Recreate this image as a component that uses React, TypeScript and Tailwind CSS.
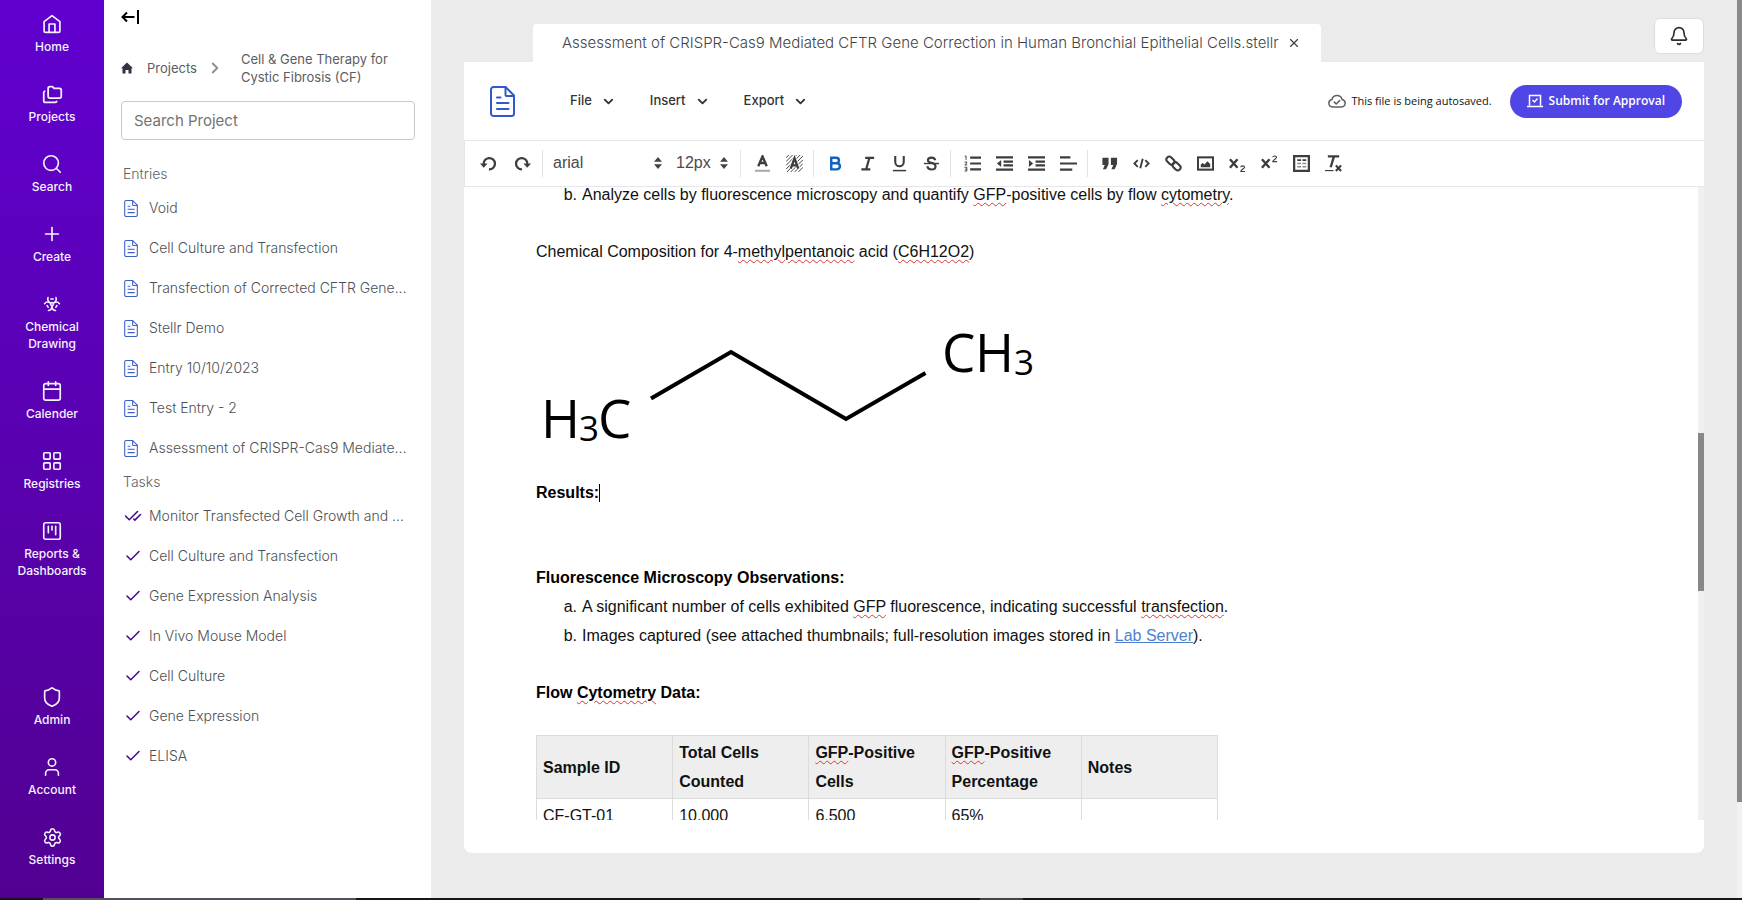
import type { ReactNode } from "react";
import {
  Bell,
  Biohazard,
  Calendar,
  Check,
  CheckCheck,
  ChevronDown,
  ChevronRight,
  Folders,
  LayoutGrid,
  Plus,
  Search,
  Settings,
  Shield,
  SquareKanban,
  User,
  X,
} from "lucide-react";

function HomeIcon() {
  return (
    <svg viewBox="0 0 24 24" className="size-5" fill="none" stroke="currentColor" strokeWidth="2" strokeLinejoin="round" strokeLinecap="round">
      <path d="M2.500 9.200 12 2l9.500 7.200V20a2 2 0 0 1-2 2h-15a2 2 0 0 1-2-2Z" />
      <path d="M8.500 21.500V12h7v9.500" />
    </svg>
  );
}

function DocIcon({ className }: { className: string }) {
  return (
    <svg viewBox="0 0 25 31" className={className} fill="none" stroke="currentColor" strokeWidth="2" strokeLinejoin="round" strokeLinecap="round">
      <path d="M15.500 1H3.500A2.500 2.500 0 0 0 1 3.500v24A2.500 2.500 0 0 0 3.500 30h18a2.500 2.500 0 0 0 2.500-2.500V9.500Z" />
      <path d="M15.500 1v8a1 1 0 0 0 1 1H24" />
      <path d="M7 11.500h3.500M7 17h11.500M7 23h11.500" />
    </svg>
  );
}

type NavEntry = { label: string; lines: string[]; icon: ReactNode };

const topNav: NavEntry[] = [
  { label: "Home", lines: ["Home"], icon: <HomeIcon /> },
  { label: "Projects", lines: ["Projects"], icon: <Folders className="size-[21px]" /> },
  { label: "Search", lines: ["Search"], icon: <Search className="size-[22px]" strokeWidth={1.8} /> },
  { label: "Create", lines: ["Create"], icon: <Plus className="size-[22px]" strokeWidth={1.8} /> },
  { label: "Chemical Drawing", lines: ["Chemical", "Drawing"], icon: <Biohazard className="size-[18px]" /> },
  { label: "Calendar", lines: ["Calender"], icon: <Calendar className="size-[22px]" strokeWidth={1.8} /> },
  { label: "Registries", lines: ["Registries"], icon: <LayoutGrid className="size-[22px]" strokeWidth={1.8} /> },
  { label: "Reports", lines: ["Reports &", "Dashboards"], icon: <SquareKanban className="size-[22px]" strokeWidth={1.8} /> },
];

const bottomNav: NavEntry[] = [
  { label: "Admin", lines: ["Admin"], icon: <Shield className="size-[22px]" strokeWidth={1.8} /> },
  { label: "Account", lines: ["Account"], icon: <User className="size-[22px]" strokeWidth={1.8} /> },
  { label: "Settings", lines: ["Settings"], icon: <Settings className="size-[21px]" strokeWidth={1.8} /> },
];

function NavList({ items }: { items: NavEntry[] }) {
  return (
    <ul className="flex flex-col gap-[29px]">
      {items.map((item) => (
        <li key={item.label}>
          <a href="#" className="flex flex-col items-center gap-1 text-center text-xs leading-[17px] font-medium text-violet-50">
            <span className="flex h-5 items-center justify-center">{item.icon}</span>
            <span>
              {item.lines.map((line) => (
                <span key={line} className="block">{line}</span>
              ))}
            </span>
          </a>
        </li>
      ))}
    </ul>
  );
}

const entries = [
  "Void",
  "Cell Culture and Transfection",
  "Transfection of Corrected CFTR Gene...",
  "Stellr Demo",
  "Entry 10/10/2023",
  "Test Entry - 2",
  "Assessment of CRISPR-Cas9 Mediate...",
];

const tasks = [
  "Monitor Transfected Cell Growth and ...",
  "Cell Culture and Transfection",
  "Gene Expression Analysis",
  "In Vivo Mouse Model",
  "Cell Culture",
  "Gene Expression",
  "ELISA",
];

function PanelItem({ icon, label }: { icon: ReactNode; label: string }) {
  return (
    <li>
      <a href="#" className="flex h-10 items-center whitespace-nowrap text-[#4c4f54]">
        <span className="flex w-7 shrink-0 items-center justify-start pl-[3px]">{icon}</span>
        {label}
      </a>
    </li>
  );
}

function ProjectPanel() {
  return (
    <aside className="flex w-[327px] shrink-0 flex-col bg-white pr-4 pl-[17px] text-sm font-light">
      <button type="button" aria-label="Collapse panel" className="mt-2 flex h-[18px] w-7 items-center text-black">
        <svg viewBox="0 0 18 14" className="h-[14px] w-[18px]" fill="none" stroke="currentColor" strokeWidth="2">
          <path d="M13.500 7H2M6 2.500 1.500 7 6 11.500M17 0v14" />
        </svg>
      </button>
      <nav aria-label="Breadcrumb" className="mt-6 flex items-center text-[13px] leading-[18px] font-normal text-[#5a5d63]">
        <a href="#" aria-label="Projects home">
          <svg viewBox="0 0 12 12" className="size-3" fill="#2f3440">
            <path d="M6 .5 12 6.200h-1.500V11.500H7.500V8h-3v3.500H1.500V6.200H0Z" />
          </svg>
        </a>
        <a href="#" className="ml-[14px]">Projects</a>
        <ChevronRight className="ml-[9px] size-[18px] text-[#8d8f94]" strokeWidth={2.5} />
        <a href="#" className="ml-[17px]">
          Cell &amp; Gene Therapy for
          <br />
          Cystic Fibrosis (CF)
        </a>
      </nav>
      <input
        type="text"
        aria-label="Search Project"
        placeholder="Search Project"
        className="mt-[15px] h-[39px] w-full shrink-0 rounded border border-[#c9c9cd] px-3 text-[15px] font-normal placeholder:text-[#737373]"
      />
      <h2 className="mt-5 flex h-7 shrink-0 items-center pl-[2px] text-[#5c5f64]">Entries</h2>
      <ul>
        {entries.map((label) => (
          <PanelItem key={label} label={label} icon={<DocIcon className="h-[17px] w-[14px] text-[#3d62c6]" />} />
        ))}
      </ul>
      <h2 className="flex h-7 shrink-0 items-center pl-[2px] text-[#5c5f64]">Tasks</h2>
      <ul>
        {tasks.map((label, i) => (
          <PanelItem
            key={label}
            label={label}
            icon={
              i === 0 ? (
                <CheckCheck className="size-[18px] shrink-0 text-[#3f0a8a]" />
              ) : (
                <Check className="size-[18px] shrink-0 text-[#3f0a8a]" />
              )
            }
          />
        ))}
      </ul>
    </aside>
  );
}

function ToolGroup({ children }: { children: ReactNode }) {
  return <div className="flex h-[27px] items-center border-l border-[#e3e3e5] pr-[3px] pl-[5px]">{children}</div>;
}

function Tool({ label, children }: { label: string; children: ReactNode }) {
  return (
    <button type="button" aria-label={label} title={label} className="flex h-6 w-8 items-center justify-center">
      <svg viewBox="0 0 18 18" className="size-[17px]" fill="none" stroke="currentColor" strokeWidth="2.200">
        {children}
      </svg>
    </button>
  );
}

function Stepper() {
  return (
    <svg viewBox="0 0 8 12" className="h-3 w-2" fill="#444">
      <path d="M0 4.800 4 0l4 4.800ZM0 7.200h8L4 12Z" />
    </svg>
  );
}

function Toolbar() {
  return (
    <div role="toolbar" aria-label="Formatting" className="flex h-[47px] shrink-0 items-center border-y border-l border-[#e6e6e8] pb-px text-[#3d3d40]">
      <div className="flex w-[77px] items-center pl-[6px]">
        <button type="button" aria-label="Undo" className="flex h-6 w-[34px] items-center justify-center">
          <svg viewBox="0 0 18 18" className="size-[17px]" fill="none" stroke="currentColor" strokeWidth="2.400">
            <path d="M4 10.500A6 6 0 1 1 9.500 15.200" />
            <path d="M0 9h8L4 13.500Z" fill="currentColor" stroke="none" />
          </svg>
        </button>
        <button type="button" aria-label="Redo" className="flex h-6 w-[34px] items-center justify-center">
          <svg viewBox="0 0 18 18" className="size-[17px]" fill="none" stroke="currentColor" strokeWidth="2.400">
            <path d="M14 10.500A6 6 0 1 0 8.500 15.200" />
            <path d="M18 9h-8l4 4.500Z" fill="currentColor" stroke="none" />
          </svg>
        </button>
      </div>
      <div className="flex h-[27px] w-[198px] items-center border-l border-[#e3e3e5] pl-[10px] font-['Liberation_Sans',sans-serif] text-base text-[#4a4a4d]">
        <label className="flex items-center">
          <select aria-label="Font" className="w-[101px] appearance-none bg-transparent">
            <option>arial</option>
          </select>
          <Stepper />
        </label>
        <label className="ml-[14px] flex items-center">
          <select aria-label="Font size" className="w-11 appearance-none bg-transparent">
            <option>12px</option>
          </select>
          <Stepper />
        </label>
      </div>
      <ToolGroup>
        <Tool label="Font color">
          <path d="M4.500 12 9 1.500 13.500 12M6 8.500h6" strokeWidth="2.500" />
          <path d="M1 16.700h16" stroke="#aaa" />
        </Tool>
        <Tool label="Highlight color">
          <path d="M0 3 3 0M0 7 7 0M0 11 11 0M0 15 15 0M1 18 18 1M5 18 18 5M9 18l9-9M13 18l5-5" strokeWidth="1" />
          <path d="M5 14.500 9 3.500l4 11M6.500 11h5" stroke="#fff" strokeWidth="4" />
          <path d="M5 14.500 9 3.500l4 11M6.500 11h5" strokeWidth="2.500" />
        </Tool>
      </ToolGroup>
      <ToolGroup>
        <Tool label="Bold">
          <path d="M4.500 3h5.200a2.900 2.900 0 0 1 0 5.800H4.500ZM4.500 8.800h6a3.200 3.200 0 0 1 0 6.400h-6Z" stroke="#0f62c4" strokeWidth="2.600" />
        </Tool>
        <Tool label="Italic">
          <path d="M6.500 3h9.500M2.500 15.300H12M11 3 7.500 15.300" strokeWidth="2.300" />
        </Tool>
        <Tool label="Underline">
          <path d="M4.500 1v6.500a4.500 4.500 0 0 0 9 0V1" />
          <path d="M2 16.500h14" strokeWidth="1.600" />
        </Tool>
        <Tool label="Strikethrough">
          <path d="M13 5.500C12.500 3.500 11 2.800 9 2.800c-2.200 0-3.800 1-3.800 2.700 0 1.500 1 2.200 3.800 2.800 3 .7 4.300 1.500 4.300 3.500S11.500 15.300 9 15.300 5 14.300 4.500 12" />
          <path d="M1 9h16" strokeWidth="1.500" />
        </Tool>
      </ToolGroup>
      <ToolGroup>
        <Tool label="Ordered list">
          <path d="M6.500 2.800H18M6.500 9H18M6.500 15.200H18" />
          <path d="M.8 1.200h1.400v4M.5 7.500H3v1L.8 10.500H3.500M.5 13H3v4H.5M1 15h2" strokeWidth="1" />
        </Tool>
        <Tool label="Outdent">
          <path d="M0 2.500h18M8 7h10M8 11h10M0 15.500h18" />
          <path d="M5.500 5.200v7.600L1 9Z" fill="currentColor" stroke="none" />
        </Tool>
        <Tool label="Indent">
          <path d="M0 2.500h18M8 7h10M8 11h10M0 15.500h18" />
          <path d="M1 5.200v7.600L5.500 9Z" fill="currentColor" stroke="none" />
        </Tool>
        <Tool label="Align">
          <path d="M0 2.500h11M0 9h18M0 15.500h13" />
        </Tool>
      </ToolGroup>
      <ToolGroup>
        <Tool label="Quote">
          <path d="M1.500 3H8v6.500L5.500 15H2l2-4.500H1.500ZM10.500 3H17v6.500L14.500 15H11l2-4.500h-2.500Z" fill="currentColor" stroke="none" />
        </Tool>
        <Tool label="Code">
          <path d="M5 5.500 1.500 9 5 12.500M13 5.500 16.500 9 13 12.500M10.300 4 7.700 14" strokeWidth="2" />
        </Tool>
        <Tool label="Link">
          <rect x="1" y="3" width="9.500" height="6" rx="3" transform="rotate(45 5.750 6)" />
          <rect x="7.500" y="9" width="9.500" height="6" rx="3" transform="rotate(45 12.250 12)" />
        </Tool>
        <Tool label="Image">
          <rect x="1" y="2.500" width="16" height="13" />
          <path d="M4 13V10l2-1.500 2 1.500 3-3.500 3 3V13Z" fill="currentColor" stroke="none" />
        </Tool>
        <Tool label="Subscript">
          <path d="m1 4.500 8 9M9 4.500l-8 9" strokeWidth="2.500" />
          <path d="M12.500 13c0-2 4-2 4 0 0 1.500-4 2.500-4 4.500H17" strokeWidth="1.200" />
        </Tool>
        <Tool label="Superscript">
          <path d="m1 4.500 8 9M9 4.500l-8 9" strokeWidth="2.500" />
          <path d="M12.500 2.500c0-2 4-2 4 0 0 1.500-4 2.500-4 4.500H17" strokeWidth="1.200" />
        </Tool>
        <Tool label="Table">
          <rect x="1.200" y="1.200" width="15.600" height="15.600" strokeWidth="2.400" />
          <path d="M4.500 5.500h4M10 5.500h4" strokeWidth="1.800" />
          <path d="M4.500 9h4M10 9h4M4.500 12.500h4M10 12.500h4" stroke="#8a8a8c" strokeWidth="1.500" />
        </Tool>
        <Tool label="Remove format">
          <path d="M3 1.500h12M9.500 1.500 6 13" strokeWidth="2.500" />
          <path d="m11.500 11 5.500 6M17 11l-5.500 6" strokeWidth="2.300" />
          <path d="M0 16.500h9" strokeWidth="1.200" />
        </Tool>
      </ToolGroup>
    </div>
  );
}

function Flagged({ children }: { children: ReactNode }) {
  return <span className="underline decoration-[#d33a3a] decoration-wavy decoration-1 underline-offset-2">{children}</span>;
}

function Item({ marker, children }: { marker: string; children: ReactNode }) {
  return (
    <li className="flex">
      <span className="w-[46px] shrink-0 pr-[5px] text-right">{marker}</span>
      <span>{children}</span>
    </li>
  );
}

function Molecule() {
  return (
    <svg width="520" height="212" viewBox="0 0 520 212" className="font-['Open_Sans',sans-serif]" role="img" aria-label="Butane skeleton">
      <path d="M115 132.500 195 86l115 67 79.500-46" fill="none" stroke="#000" strokeWidth="4" />
      <g fontSize="53" fill="#000">
        <text x="5" y="172">H</text>
        <text x="43" y="175" fontSize="35">3</text>
        <text x="62" y="172">C</text>
        <text x="406" y="106">C</text>
        <text x="439" y="106">H</text>
        <text x="478" y="109" fontSize="35">3</text>
      </g>
    </svg>
  );
}

function DataTable() {
  const cell = "border border-[#dcdcdc] px-[6px] py-[2px] text-left";
  return (
    <table className="w-[682px] table-fixed border-collapse">
      <thead className="bg-[#eeeeee]">
        <tr>
          <th className={cell}>Sample ID</th>
          <th className={cell}>Total Cells Counted</th>
          <th className={cell}><Flagged>GFP</Flagged>-Positive Cells</th>
          <th className={cell}><Flagged>GFP</Flagged>-Positive Percentage</th>
          <th className={cell}>Notes</th>
        </tr>
      </thead>
      <tbody>
        <tr>
          <td className={cell}>CF-GT-01</td>
          <td className={cell}>10,000</td>
          <td className={cell}>6,500</td>
          <td className={cell}>65%</td>
          <td className={cell} />
        </tr>
      </tbody>
    </table>
  );
}

function EditorBody() {
  return (
    <div className="mb-[33px] flex min-h-0 flex-1">
      <article className="min-w-0 flex-1 overflow-hidden pl-[72px] font-['Liberation_Sans',Arial,sans-serif] text-base leading-[29px] text-[#111]">
        <ol className="-mt-[7px]">
          <Item marker="b.">
            Analyze cells by fluorescence microscopy and quantify <Flagged>GFP</Flagged>-positive cells by flow{" "}
            <Flagged>cytometry</Flagged>.
          </Item>
        </ol>
        <p className="mt-7">
          Chemical Composition for 4-<Flagged>methylpentanoic</Flagged> acid (<Flagged>C6H12O2</Flagged>)
        </p>
        <Molecule />
        <p className="flex items-center font-bold text-black">
          Results:<span className="h-[18px] w-px bg-black" />
        </p>
        <h3 className="mt-14 font-bold text-black">Fluorescence Microscopy Observations:</h3>
        <ol>
          <Item marker="a.">
            A significant number of cells exhibited <Flagged>GFP</Flagged> fluorescence, indicating successful{" "}
            <Flagged>transfection</Flagged>.
          </Item>
          <Item marker="b.">
            Images captured (see attached thumbnails; full-resolution images stored in{" "}
            <a href="#" className="text-[#4f80cf] underline">Lab Server</a>).
          </Item>
        </ol>
        <h3 className="mt-7 mb-7 font-bold text-black">
          Flow <Flagged>Cytometry</Flagged> Data:
        </h3>
        <DataTable />
      </article>
      <div className="w-[6px] shrink-0 bg-[#f0f0f0]">
        <div className="mt-[246px] h-[158px] bg-[#878787]" />
      </div>
    </div>
  );
}

function MenuButton({ label }: { label: string }) {
  return (
    <button type="button" className="flex items-center gap-[9px] text-[13px] font-medium text-[#333]">
      {label}
      <ChevronDown className="size-[15px]" strokeWidth={3} />
    </button>
  );
}

export default function App() {
  return (
    <div className="flex h-screen flex-col overflow-hidden bg-[#ebebeb] font-['Inter',sans-serif]">
      <div className="flex min-h-0 flex-1">
        <nav aria-label="Main" className="flex w-[104px] shrink-0 flex-col justify-between bg-linear-to-b from-[#6000d0] to-[#520092] pt-[14px] pb-[30px]">
          <NavList items={topNav} />
          <NavList items={bottomNav} />
        </nav>
        <ProjectPanel />
        <main className="flex min-w-0 flex-1 flex-col px-[33px]">
          <header className="flex shrink-0 items-start justify-between">
            <div className="mt-6 ml-[69px] flex h-[38px] items-center gap-2 rounded-t bg-white pr-5 pl-[29px] text-[15px] font-light text-[#444447]">
              <span>Assessment of CRISPR-Cas9 Mediated CFTR Gene Correction in Human Bronchial Epithelial Cells.stellr</span>
              <button type="button" aria-label="Close tab">
                <X className="size-[14px]" />
              </button>
            </div>
            <button
              type="button"
              aria-label="Notifications"
              className="mt-[18px] flex h-9 w-[50px] items-center justify-center rounded-md border border-[#dcdce0] bg-white text-[#2d2d30]"
            >
              <Bell className="size-5" />
            </button>
          </header>
          <section className="mb-[45px] flex min-h-0 flex-1 flex-col rounded-b-lg bg-white">
            <div className="flex h-[78px] shrink-0 items-center pr-[22px] pl-[26px]">
              <DocIcon className="h-[31px] w-[25px] text-[#3159cc]" />
              <div className="ml-[55px] flex gap-[34px]">
                <MenuButton label="File" />
                <MenuButton label="Insert" />
                <MenuButton label="Export" />
              </div>
              <p className="ml-auto flex items-center gap-[5px] font-['Open_Sans',sans-serif] text-[11px] text-[#111]">
                <svg viewBox="0 0 24 24" className="size-[18px] text-[#5c5f63]" fill="none" stroke="currentColor" strokeWidth="2" strokeLinecap="round" strokeLinejoin="round">
                  <path d="M6 20a5 5 0 0 1-.8-9.900 7 7 0 0 1 13.600 0A5 5 0 0 1 18 20Z" />
                  <path d="m8.500 13.500 2.500 2.500 4.500-4.500" />
                </svg>
                This file is being autosaved.
              </p>
              <button
                type="button"
                className="ml-[18px] flex h-[33px] items-center gap-[6px] rounded-full bg-[#4f46e5] px-[17px] font-['Open_Sans',sans-serif] text-xs font-semibold text-white"
              >
                <svg viewBox="0 0 16 14" className="h-[14px] w-4" fill="none" stroke="currentColor" strokeWidth="1.500">
                  <path d="M2.500 11.500v-10h11v10M0 12.500h16M5.500 6l2 2 3-3.500" />
                </svg>
                Submit for Approval
              </button>
            </div>
            <Toolbar />
            <EditorBody />
          </section>
        </main>
        <div className="w-[5px] shrink-0 bg-[#f1f1f1]">
          <div className="h-[802px] bg-[#8a8a8a]" />
        </div>
      </div>
      <div className="flex h-[2px] shrink-0 bg-[#17171b] pl-[43px]">
        <div className="h-full w-[313px] bg-[#55505c]" />
        <div className="ml-[624px] h-full w-[43px] bg-[#444]" />
      </div>
    </div>
  );
}
